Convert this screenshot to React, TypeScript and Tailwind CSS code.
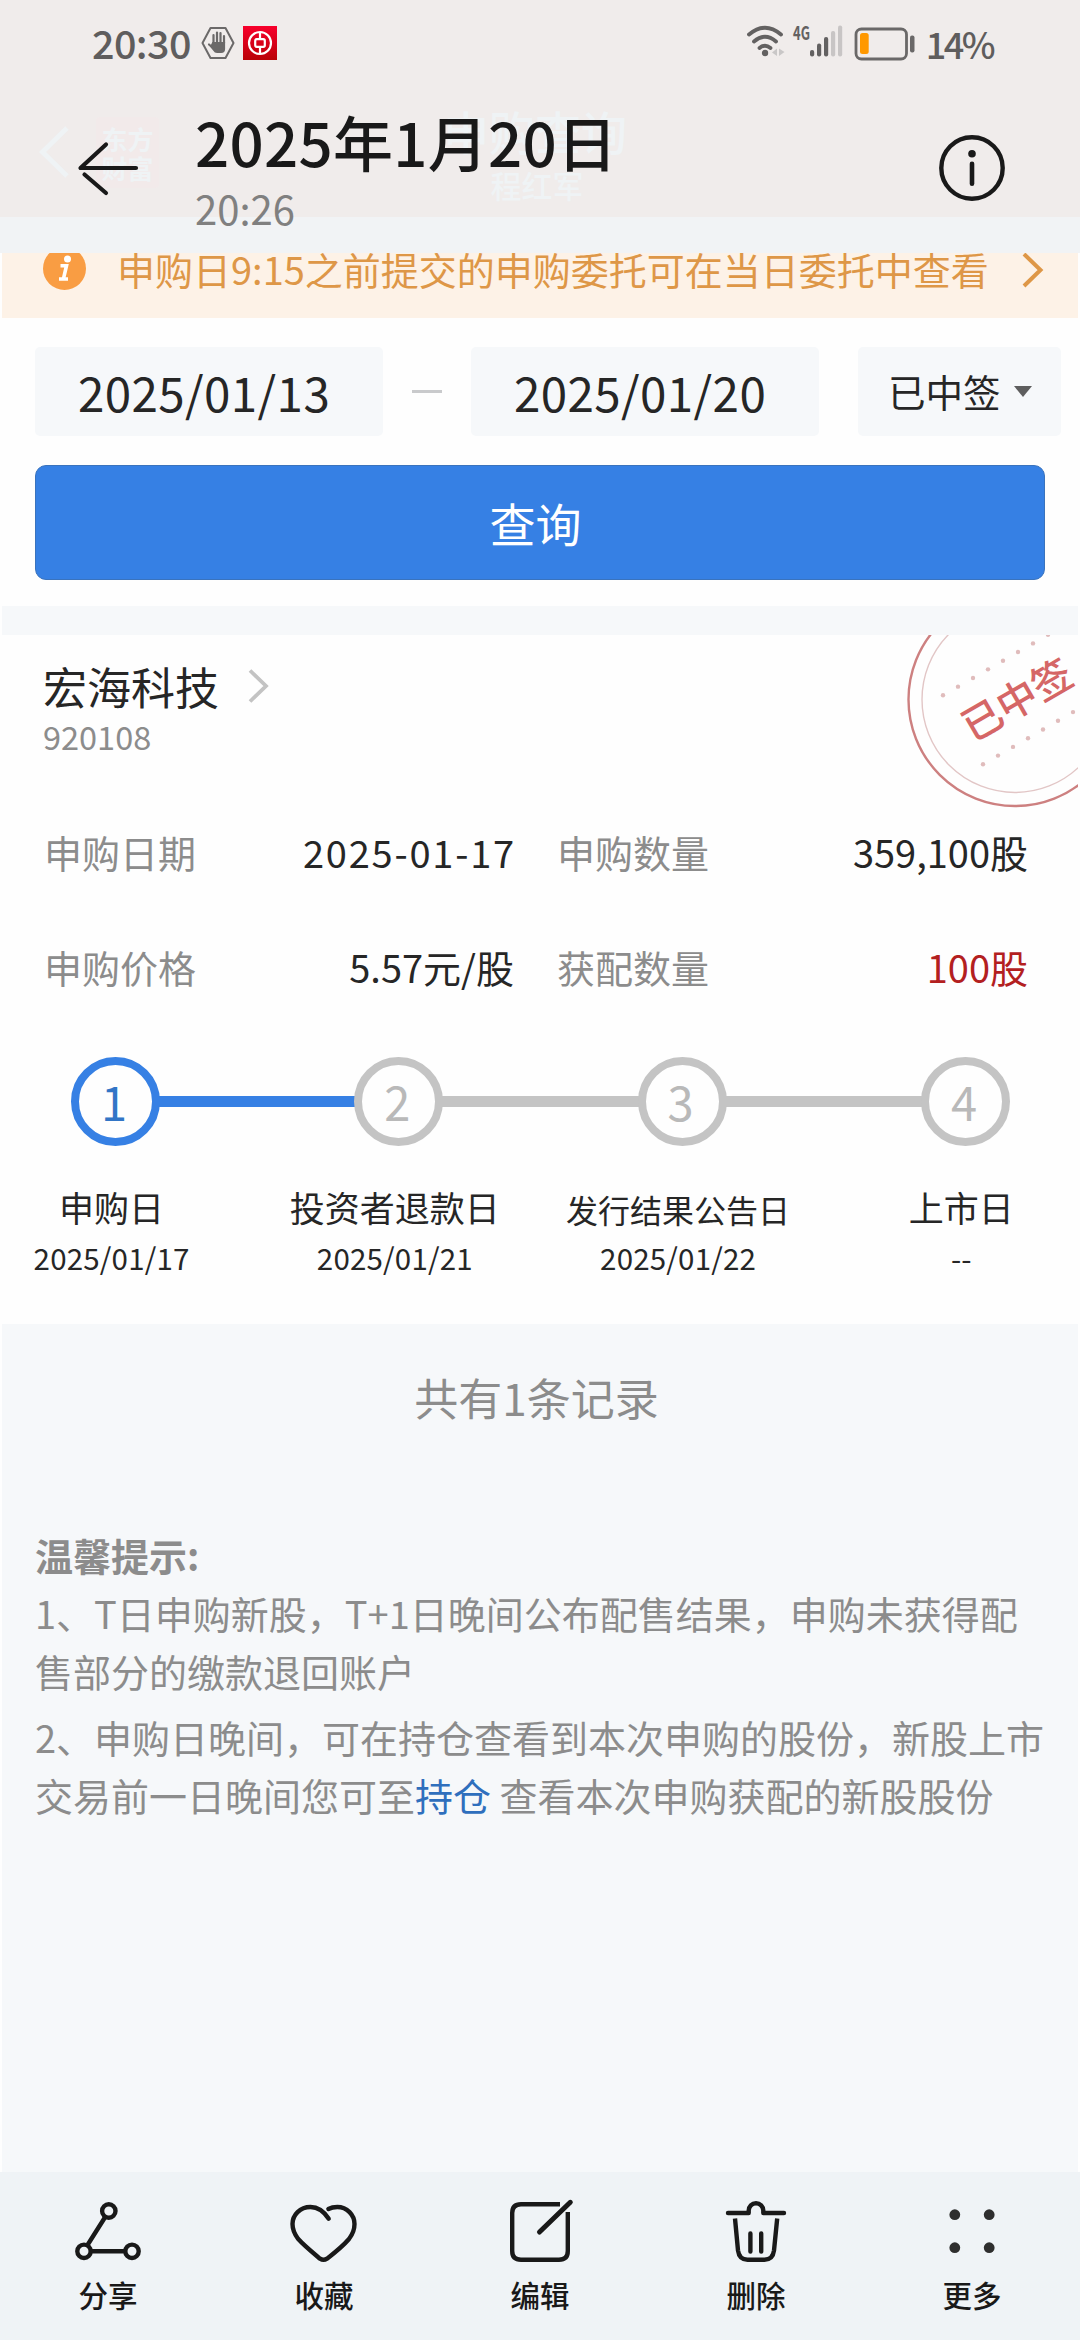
import React from 'react'

const details = [
  { label: '申购日期', value: '2025-01-17', valueClass: 'text-[#262626] tracking-[1.800px] -mr-[2px]' },
  { label: '申购数量', value: '359,100股', valueClass: 'text-[#262626]' },
  { label: '申购价格', value: '5.57元/股', valueClass: 'text-[#262626]' },
  { label: '获配数量', value: '100股', valueClass: 'text-[#b3201f]' },
]

const steps = [
  { name: '申购日', date: '2025/01/17', nameClass: 'text-[35px]' },
  { name: '投资者退款日', date: '2025/01/21', nameClass: 'text-[35px]' },
  { name: '发行结果公告日', date: '2025/01/22', nameClass: 'text-[32px] pt-[2px]' },
  { name: '上市日', date: '--', nameClass: 'text-[35px]' },
]

const StatusBar = () => (
  <div className="flex h-[84px] items-center pl-[92px] pr-[87px] text-[#5f5d5d]">
    <span className="text-[39.500px] font-medium leading-[56px] tracking-[-0.600px]">20:30</span>
    <svg className="ml-[10px] mt-[2px]" width="34" height="34" viewBox="0 0 34 34" fill="none">
      <path d="M9.500 2h15l8 15-8 15h-15l-8-15z" stroke="#6b6969" strokeWidth="2" strokeLinejoin="round" />
      <path
        d="M12.500 17V9M16 16V6.500M19.500 16V7M23 17V10M8 18.500l4.500 4"
        stroke="#6b6969"
        strokeWidth="2.200"
        strokeLinecap="round"
      />
      <path d="M11.400 16h12.700v7q0 4-4 4h-4q-2.500 0-4-2.500l-3-4z" fill="#6b6969" />
    </svg>
    <svg className="ml-[8px] mt-[2px]" width="34" height="34" viewBox="0 0 34 34" fill="none">
      <defs>
        <linearGradient id="bank" x1="0" y1="0" x2="0" y2="1">
          <stop offset="0" stopColor="#f8002c" />
          <stop offset="1" stopColor="#b90207" />
        </linearGradient>
      </defs>
      <rect width="34" height="34" fill="url(#bank)" />
      <circle cx="17" cy="17" r="11" stroke="#fff" strokeWidth="2.200" />
      <rect x="12.200" y="13.200" width="9.600" height="7.600" rx="1.500" stroke="#fff" strokeWidth="2.200" />
      <path d="M17 6v7M17 21v7" stroke="#fff" strokeWidth="2.200" />
    </svg>

    <div className="ml-auto flex items-center">
      <svg width="96" height="36" viewBox="747 25 96 36" fill="none">
        <g stroke="#636161" strokeWidth="3.800" strokeLinecap="round">
          <path d="M749 35.500Q765 22 781 35.500" />
          <path d="M754 42.500Q765 33 776 42.500" />
          <path d="M759.500 49Q765 44.500 770.500 49" />
        </g>
        <circle cx="765" cy="54" r="3.200" fill="#636161" />
        <path d="M777 49.500v7.500l-5-3.500zM779 49.500v7.500l5.500-4z" fill="#c9c7c7" />
        <text x="793" y="41" fontSize="19" fontWeight="700" textLength="17" lengthAdjust="spacingAndGlyphs" fill="#636161">
          4G
        </text>
        <g fill="#636161">
          <rect x="810" y="51" width="4.200" height="6.500" rx="2" />
          <rect x="817" y="44.500" width="4.200" height="13" rx="2" />
          <rect x="824" y="38" width="4.200" height="19.500" rx="2" />
        </g>
        <g fill="#c8c5c5">
          <rect x="831" y="32" width="4.200" height="25.500" rx="2" />
          <rect x="838" y="26.500" width="4.200" height="31" rx="2" />
        </g>
      </svg>
      <svg className="ml-[11px] mt-[3px]" width="62" height="34" viewBox="854 27 62 34" fill="none">
        <rect x="856" y="29" width="50.500" height="30" rx="5.500" stroke="#6a6868" strokeWidth="2.800" />
        <rect x="860" y="33" width="8.700" height="21" rx="2.500" fill="#ff9800" />
        <rect x="910" y="35.500" width="4.500" height="17" rx="2" fill="#6a6868" />
      </svg>
      <span className="ml-[10px] mt-[1px] text-[36px] font-medium leading-[56px] tracking-[-2.500px]">14%</span>
    </div>
  </div>
)

const Header = () => (
  <header className="relative z-10 h-[217px] bg-[#f0eceb]">
    {/* page title showing faintly through the translucent bar */}
    <div className="absolute inset-0 text-[#eff3f5]">
      <svg className="absolute left-[38px] top-[124px]" width="34" height="56" viewBox="0 0 34 56" fill="none">
        <path d="M29 4L4.500 28L29 52" stroke="currentColor" strokeWidth="5" />
      </svg>
      <div className="absolute left-[96px] top-[117px] flex h-[71px] w-[63px] flex-col items-center justify-center rounded bg-[#f2eaea] text-[26px] font-bold leading-[29px]">
        <span>东方</span>
        <span>财富</span>
      </div>
      <div className="absolute left-[442px] top-[98px] w-[186px] text-center text-[46px] font-medium leading-[64px]">申购查询</div>
      <div className="absolute left-[488px] top-[164px] w-[98px] text-center text-[31px] font-medium leading-[42px]">程红军</div>
    </div>

    <div className="relative">
      <StatusBar />
      <div className="flex pl-[76px] pr-[74px] text-[#191919]">
        <svg className="mt-[52px]" width="64" height="64" viewBox="76 136 64 64" fill="none">
          <path
            d="M106 144.500L80.500 168H136M84.500 174.500L106 193"
            stroke="currentColor"
            strokeWidth="4.200"
            strokeLinecap="round"
            strokeLinejoin="round"
          />
        </svg>
        <div className="ml-[55px] pt-[19px]">
          <h1 className="text-[60px] font-medium leading-[76px] tracking-[0.300px]">2025年1月20日</h1>
          <p className="mt-1 text-[40px] leading-[50px] text-[#808080]">20:26</p>
        </div>
        <svg className="ml-auto mt-[50px]" width="68" height="68" viewBox="0 0 68 68" fill="none">
          <circle cx="34" cy="34" r="30.700" stroke="currentColor" strokeWidth="4.400" />
          <circle cx="34" cy="19.700" r="3.800" fill="currentColor" />
          <path d="M34 29.700V49.700" stroke="currentColor" strokeWidth="4.600" strokeLinecap="round" />
        </svg>
      </div>
    </div>
  </header>
)

const Notice = () => (
  <div className="flex h-[65px] items-center overflow-hidden bg-[#fdf2e7] pb-[34px] pl-[41px] text-[#de9747]">
    <svg className="shrink-0" width="43" height="43" viewBox="0 0 43 43" fill="none">
      <circle cx="21.500" cy="21.500" r="21.500" fill="#f99d43" />
      <circle cx="24.500" cy="12" r="3.500" fill="#fff" />
      <path d="M17.500 18.700h6l-3 13M16 32h9" stroke="#fff" strokeWidth="3.600" />
    </svg>
    <span className="ml-[31px] whitespace-nowrap text-[38px] leading-[56px]">申购日9:15之前提交的申购委托可在当日委托中查看</span>
    <svg className="ml-auto mr-[34px] mt-[2px] shrink-0" width="22" height="36" viewBox="0 0 22 36" fill="none">
      <path d="M2 2L18.500 18L2 34" stroke="currentColor" strokeWidth="4" />
    </svg>
  </div>
)

const Filters = () => (
  <div className="h-[288px] bg-[#fefefe] pl-[33px] pt-[29px]">
    <div className="flex h-[89px] items-center text-[#262626]">
      <div className="flex h-full w-[348px] items-center rounded-[5px] bg-[#f6f8fa] pl-[43px] text-[47.500px] tracking-[0.400px]">
        2025/01/13
      </div>
      <div className="ml-[29px] h-[3px] w-[30px] bg-[#c9cacc]" />
      <div className="ml-[29px] flex h-full w-[348px] items-center rounded-[5px] bg-[#f6f8fa] pl-[43px] text-[47.500px] tracking-[0.400px]">
        2025/01/20
      </div>
      <div className="ml-[39px] flex h-full w-[203px] items-center rounded-[5px] bg-[#f6f8fa] pl-[30px] text-[37.500px]">
        已中签
        <svg className="ml-[13px]" width="18" height="11" viewBox="0 0 18 11">
          <path d="M0 0h18l-9 11z" fill="#5e5e5e" />
        </svg>
      </div>
    </div>
    <button className="mt-[29px] h-[115px] w-[1010px] rounded-[11px] border border-[#3a73bd] bg-[#3680e4] pr-[9px] text-[46px] text-white">
      查询
    </button>
  </div>
)

const Stamp = () => (
  <svg className="absolute right-0 top-0" width="174" height="180" viewBox="904 635 174 180" fill="none">
    <circle cx="1015" cy="699.500" r="106.500" stroke="#cd8080" strokeWidth="2.400" />
    <circle cx="1015" cy="699.500" r="93" stroke="#e2c6c6" strokeWidth="1.400" />
    {[0, 1, 2, 3, 4, 5, 6, 7].map((i) => (
      <circle key={`top-${i}`} cx={943 + i * 15} cy={695.3 - i * 8.65} r="2.200" fill="#e0bcbc" />
    ))}
    {[0, 1, 2, 3, 4, 5, 6].map((i) => (
      <circle key={`bottom-${i}`} cx={983 + i * 15} cy={764.3 - i * 8.7} r="2.200" fill="#e0bcbc" />
    ))}
    <text x="1017" y="715" fontSize="40" fontWeight="500" textAnchor="middle" fill="#d56666" transform="rotate(-30 1016 700)">
      已中签
    </text>
  </svg>
)

const StepBar = () => (
  <>
    <div className="mt-[62px] flex items-center pl-[69px] pr-[68px]">
      {steps.map((step, index) => (
        <React.Fragment key={step.name}>
          {index > 0 && <div className={`-mx-[2px] h-[11px] flex-1 ${index === 1 ? 'bg-[#3680e4]' : 'bg-[#c4c4c4]'}`} />}
          <div
            className={`relative flex size-[89px] shrink-0 items-center justify-center rounded-full border-8 bg-[#fefefe] pr-[3px] text-[47px] ${
              index === 0 ? 'border-[#3680e4] text-[#3275c6]' : 'border-[#c4c4c4] text-[#b9b9b9]'
            }`}
          >
            {index + 1}
          </div>
        </React.Fragment>
      ))}
    </div>
    <div className="-ml-[32px] mt-[36px] grid w-[1133px] grid-cols-4 text-center leading-[50px] text-[#262626]">
      {steps.map((step) => (
        <div key={step.name}>
          <p className={`h-[50px] ${step.nameClass}`}>{step.name}</p>
          <p className="text-[29.500px] tracking-[0.200px]">{step.date}</p>
        </div>
      ))}
    </div>
  </>
)

const RecordCard = () => (
  <div className="relative h-[689px] overflow-hidden bg-[#fefefe] pt-[21px]">
    <Stamp />
    <div className="flex items-center pl-[41px] text-[44px] leading-[60px] text-[#262626]">
      宏海科技
      <svg className="ml-[29px]" width="22" height="34" viewBox="0 0 22 34" fill="none">
        <path d="M2 1.500L18 17L2 32.500" stroke="#c3c3c3" strokeWidth="3.800" />
      </svg>
    </div>
    <p className="pl-[41px] text-[32.500px] leading-[40px] text-[#8c8c8c]">920108</p>
    <div className="mt-[68px] grid grid-cols-[470px_471px] gap-x-[43px] gap-y-[59px] pl-[42px] text-[38px] leading-[56px]">
      {details.map((item) => (
        <div key={item.label} className="flex justify-between">
          <span className="text-[#8c8c8c]">{item.label}</span>
          <span className={item.valueClass}>{item.value}</span>
        </div>
      ))}
    </div>
    <StepBar />
  </div>
)

const Tips = () => (
  <div className="mt-[57px] whitespace-nowrap pl-[33px] text-[38px] leading-[58px] text-[#8c8c8c]">
    <p className="font-bold">温馨提示:</p>
    <p>
      1、T日申购新股，T+1日晚间公布配售结果，申购未获得配
      <br />
      售部分的缴款退回账户
    </p>
    <p className="mt-2">
      2、申购日晚间，可在持仓查看到本次申购的股份，新股上市
      <br />
      交易前一日晚间您可至<span className="text-[#2f6fbd]">持仓</span> 查看本次申购获配的新股股份
    </p>
  </div>
)

const actions = [
  {
    label: '分享',
    icon: (
      <>
        <circle cx="36.800" cy="13" r="6.700" />
        <circle cx="12" cy="53.300" r="6.700" />
        <circle cx="60" cy="53.300" r="6.700" />
        <path d="M33.200 19L15.500 47M19 53.300H53" />
      </>
    ),
  },
  {
    label: '收藏',
    icon: (
      <path d="M40.400 11C43 9.600 46 9 49.300 9C59 9 66.500 17 66.500 26C66.500 32 64.500 36.500 61 41C55 48 47 54.500 39 60.700Q35.500 63 32 60.700C24 54 16 47.500 10 40.800C6.500 36 4.500 32 4.500 26C4.500 17 12 9 22.500 9C30 9 36 13.500 40.700 20.700" />
    ),
  },
  {
    label: '编辑',
    icon: (
      <>
        <path strokeLinecap="butt" d="M56 6.200H17Q8.200 6.200 8.200 15V53Q8.200 61.700 17 61.700H55Q63.800 61.700 63.800 53V14" />
        <path strokeWidth="5" d="M66.300 4.300L35.500 34" />
      </>
    ),
  },
  {
    label: '删除',
    icon: (
      <>
        <path d="M8 15H28.700V12.500A7.300 7.300 0 0 1 43.300 12.500V15H64" />
        <path strokeLinecap="butt" d="M15 20.500L18 52.500Q19.200 61.700 27.500 61.700H44.500Q52.800 61.700 54 52.500L57.200 20.500" />
        <path d="M30.400 35.500V53.500M41.200 35.500V53.500" />
      </>
    ),
  },
  {
    label: '更多',
    icon: (
      <g fill="#2e2e2e" stroke="none">
        <circle cx="18.800" cy="16.700" r="5.400" />
        <circle cx="53.200" cy="16.700" r="5.400" />
        <circle cx="18.800" cy="49.700" r="5.400" />
        <circle cx="53.200" cy="49.700" r="5.400" />
      </g>
    ),
  },
]

const BottomBar = () => (
  <nav className="grid h-[168px] grid-cols-5 bg-[#eff3f6] pt-[26px] text-[#191919]">
    {actions.map((action) => (
      <div key={action.label} className="flex flex-col items-center">
        <svg
          width="72"
          height="72"
          viewBox="0 0 72 72"
          fill="none"
          stroke="currentColor"
          strokeWidth="4.400"
          strokeLinecap="round"
          strokeLinejoin="round"
        >
          {action.icon}
        </svg>
        <span className="mt-[4px] text-[29.500px] font-medium leading-[40px]">{action.label}</span>
      </div>
    ))}
  </nav>
)

const App = () => {
  return (
    <div className="flex h-[2340px] w-[1080px] flex-col overflow-hidden bg-[#fefefe] font-['Noto_Sans_CJK_SC',sans-serif]">
      <Header />
      <div className="h-[36px] shrink-0 bg-[#f1f3f5]" />
      <main className="mx-[2px] flex-1 bg-[#f6f8fa]">
        <Notice />
        <Filters />
        <div className="h-[29px]" />
        <RecordCard />
        <p className="pr-[7px] pt-[1px] text-center text-[44px] leading-[144px] text-[#8c8c8c]">共有1条记录</p>
        <Tips />
      </main>
      <BottomBar />
    </div>
  )
}

export default App
